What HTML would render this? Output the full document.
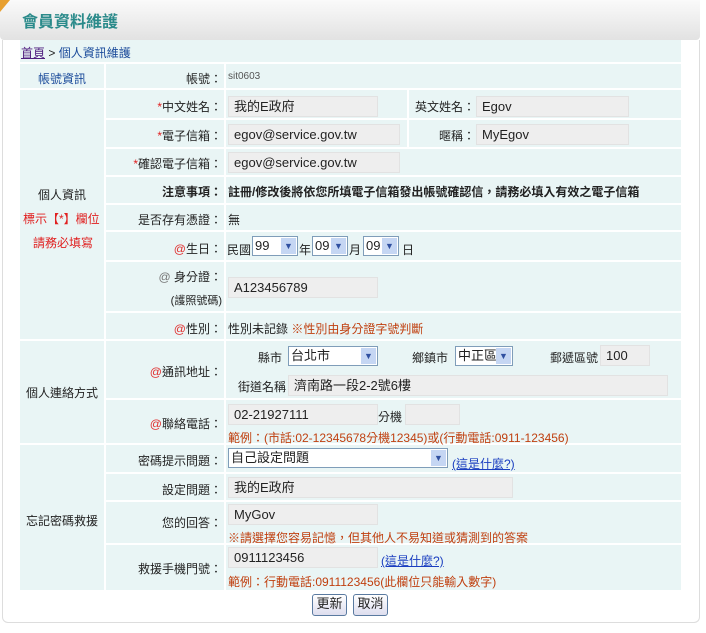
<!DOCTYPE html>
<html><head><meta charset="utf-8"><style>
*{margin:0;padding:0;box-sizing:border-box}
body{width:706px;height:633px;background:#fff;position:relative;overflow:hidden;font-family:"Liberation Sans","Noto Sans CJK TC",sans-serif;font-size:12px;color:#222}
.a{position:absolute;white-space:nowrap}
.hd{left:0;top:0;width:700px;height:40px;background:linear-gradient(#fafafa,#e2e2e2);border-radius:0 0 4px 4px}
.tri{left:0;top:0;width:0;height:0;border-top:12px solid #e8a030;border-right:10px solid transparent}
.ttl{left:22px;top:8px;font-size:16px;color:#2a8a8a;font-weight:bold}
.pn{left:2px;top:40px;width:698px;height:583px;border:1px solid #ddd;border-top:none;border-radius:0 0 6px 6px;background:#fff}
.c{background:#e9f5f5;position:absolute}
.lb{position:absolute;text-align:right;white-space:nowrap}
.in{position:absolute;background:#eeeeee;border:1px solid #e2e2e2;height:21px;padding:2px 5px;font-size:13px;line-height:15px;white-space:nowrap}
.sel{position:absolute;background:#fff;border:1px solid #7f9db9;height:20px;padding:1px 2px;font-size:13px;line-height:16px;white-space:nowrap;overflow:hidden}
.sel i{position:absolute;right:1px;top:1px;width:15px;height:16px;background:#c5d6f3;color:#3050a0;font-style:normal;font-size:9px;text-align:center;line-height:16px}
.red{color:#e02020}
.org{color:#c04010}
.at{color:#e03030}
.lnk{color:#1a3ec0;text-decoration:underline}
.btn{position:absolute;top:594px;height:22px;border:1px solid #5a7aa0;border-radius:3px;background:linear-gradient(#fff,#dde);font-size:13px;line-height:18px;text-align:center;white-space:nowrap}
</style></head><body>
<div class="a hd"></div><div class="a tri"></div>
<div class="a ttl">會員資料維護</div>
<div class="a pn"></div>

<div class="c" style="left:20px;top:40px;width:661px;height:22px"></div>
<div class="a" style="left:21px;top:44px"><span style="color:#502080;text-decoration:underline">首頁</span> &gt; <span style="color:#1a4a9a">個人資訊維護</span></div>

<div class="c" style="left:20px;top:64px;width:84px;height:24px"></div>
<div class="c" style="left:20px;top:90px;width:84px;height:249px"></div>
<div class="c" style="left:20px;top:341px;width:84px;height:102px"></div>
<div class="c" style="left:20px;top:445px;width:84px;height:145px"></div>
<div class="a" style="left:38px;top:70px;color:#1a4a9a">帳號資訊</div>
<div class="a" style="left:38px;top:186px">個人資訊</div>
<div class="a red" style="left:23px;top:210px">標示【*】欄位</div>
<div class="a red" style="left:33px;top:234px">請務必填寫</div>
<div class="a" style="left:26px;top:384px">個人連絡方式</div>
<div class="a" style="left:26px;top:512px">忘記密碼救援</div>

<div class="c" style="left:106px;top:64px;width:118px;height:24px"></div><div class="c" style="left:226px;top:64px;width:455px;height:24px"></div>
<div class="c" style="left:106px;top:90px;width:118px;height:28px"></div><div class="c" style="left:226px;top:90px;width:181px;height:28px"></div><div class="c" style="left:409px;top:90px;width:272px;height:28px"></div>
<div class="c" style="left:106px;top:120px;width:118px;height:27px"></div><div class="c" style="left:226px;top:120px;width:181px;height:27px"></div><div class="c" style="left:409px;top:120px;width:272px;height:27px"></div>
<div class="c" style="left:106px;top:149px;width:118px;height:26px"></div><div class="c" style="left:226px;top:149px;width:455px;height:26px"></div>
<div class="c" style="left:106px;top:177px;width:118px;height:26px"></div><div class="c" style="left:226px;top:177px;width:455px;height:26px"></div>
<div class="c" style="left:106px;top:205px;width:118px;height:25px"></div><div class="c" style="left:226px;top:205px;width:455px;height:25px"></div>
<div class="c" style="left:106px;top:232px;width:118px;height:28px"></div><div class="c" style="left:226px;top:232px;width:455px;height:28px"></div>
<div class="c" style="left:106px;top:262px;width:118px;height:49px"></div><div class="c" style="left:226px;top:262px;width:455px;height:49px"></div>
<div class="c" style="left:106px;top:313px;width:118px;height:26px"></div><div class="c" style="left:226px;top:313px;width:455px;height:26px"></div>
<div class="c" style="left:106px;top:341px;width:118px;height:57px"></div><div class="c" style="left:226px;top:341px;width:455px;height:57px"></div>
<div class="c" style="left:106px;top:400px;width:118px;height:43px"></div><div class="c" style="left:226px;top:400px;width:455px;height:43px"></div>
<div class="c" style="left:106px;top:445px;width:118px;height:27px"></div><div class="c" style="left:226px;top:445px;width:455px;height:27px"></div>
<div class="c" style="left:106px;top:474px;width:118px;height:26px"></div><div class="c" style="left:226px;top:474px;width:455px;height:26px"></div>
<div class="c" style="left:106px;top:502px;width:118px;height:41px"></div><div class="c" style="left:226px;top:502px;width:455px;height:41px"></div>
<div class="c" style="left:106px;top:545px;width:118px;height:45px"></div><div class="c" style="left:226px;top:545px;width:455px;height:45px"></div>

<div class="lb" style="right:484px;top:70px">帳號：</div>
<div class="a" style="left:228px;top:71px;font-size:10px;color:#555">sit0603</div>

<div class="lb" style="right:484px;top:98px"><span class="red">*</span>中文姓名：</div>
<div class="in" style="left:228px;top:96px;width:150px">我的E政府</div>
<div class="lb" style="right:231px;top:98px">英文姓名：</div>
<div class="in" style="left:476px;top:96px;width:153px">Egov</div>

<div class="lb" style="right:484px;top:127px"><span class="red">*</span>電子信箱：</div>
<div class="in" style="left:228px;top:124px;width:172px">egov@service.gov.tw</div>
<div class="lb" style="right:231px;top:127px">暱稱：</div>
<div class="in" style="left:476px;top:124px;width:153px">MyEgov</div>

<div class="lb" style="right:484px;top:155px"><span class="red">*</span>確認電子信箱：</div>
<div class="in" style="left:228px;top:152px;width:172px">egov@service.gov.tw</div>

<div class="lb" style="right:484px;top:183px;font-weight:bold">注意事項：</div>
<div class="a" style="left:228px;top:183px;font-weight:bold">註冊/修改後將依您所填電子信箱發出帳號確認信，請務必填入有效之電子信箱</div>

<div class="lb" style="right:484px;top:211px">是否存有憑證：</div>
<div class="a" style="left:228px;top:211px">無</div>

<div class="lb" style="right:484px;top:240px"><span class="at">@</span>生日：</div>
<div class="a" style="left:227px;top:241px">民國</div>
<div class="sel" style="left:252px;top:236px;width:46px">99<i>▼</i></div>
<div class="a" style="left:299px;top:241px">年</div>
<div class="sel" style="left:312px;top:236px;width:36px">09<i>▼</i></div>
<div class="a" style="left:349px;top:241px">月</div>
<div class="sel" style="left:363px;top:236px;width:36px">09<i>▼</i></div>
<div class="a" style="left:402px;top:241px">日</div>

<div class="lb" style="right:484px;top:268px"><span style="color:#777">@</span> 身分證：</div>
<div class="lb" style="right:484px;top:292px;font-size:11px">(護照號碼)</div>
<div class="in" style="left:228px;top:277px;width:150px">A123456789</div>

<div class="lb" style="right:484px;top:320px"><span class="at">@</span>性別：</div>
<div class="a" style="left:228px;top:320px">性別未記錄 <span class="org">※性別由身分證字號判斷</span></div>

<div class="lb" style="right:484px;top:363px"><span class="at">@</span>通訊地址：</div>
<div class="a" style="left:258px;top:349px">縣市</div>
<div class="sel" style="left:288px;top:346px;width:90px">台北市<i>▼</i></div>
<div class="a" style="left:412px;top:349px">鄉鎮市</div>
<div class="sel" style="left:455px;top:346px;width:58px">中正區<i>▼</i></div>
<div class="a" style="left:550px;top:349px">郵遞區號</div>
<div class="in" style="left:600px;top:345px;width:50px">100</div>
<div class="a" style="left:238px;top:378px">街道名稱</div>
<div class="in" style="left:288px;top:375px;width:380px">濟南路一段2-2號6樓</div>

<div class="lb" style="right:484px;top:415px"><span class="at">@</span>聯絡電話：</div>
<div class="in" style="left:228px;top:404px;width:150px">02-21927111</div>
<div class="a" style="left:378px;top:408px">分機</div>
<div class="in" style="left:405px;top:404px;width:55px"></div>
<div class="a org" style="left:228px;top:429px">範例：(市話:02-12345678分機12345)或(行動電話:0911-123456)</div>

<div class="lb" style="right:484px;top:452px">密碼提示問題：</div>
<div class="sel" style="left:228px;top:448px;width:220px">自己設定問題<i>▼</i></div>
<div class="a lnk" style="left:452px;top:455px">(這是什麼?)</div>

<div class="lb" style="right:484px;top:481px">設定問題：</div>
<div class="in" style="left:228px;top:477px;width:285px">我的E政府</div>

<div class="lb" style="right:484px;top:514px">您的回答：</div>
<div class="in" style="left:228px;top:504px;width:150px">MyGov</div>
<div class="a org" style="left:228px;top:529px">※請選擇您容易記憶，但其他人不易知道或猜測到的答案</div>

<div class="lb" style="right:484px;top:560px">救援手機門號：</div>
<div class="in" style="left:228px;top:547px;width:150px">0911123456</div>
<div class="a lnk" style="left:381px;top:552px">(這是什麼?)</div>
<div class="a org" style="left:228px;top:573px">範例：行動電話:0911123456(此欄位只能輸入數字)</div>

<div class="btn" style="left:312px;width:35px">更新</div>
<div class="btn" style="left:353px;width:35px">取消</div>
</body></html>
